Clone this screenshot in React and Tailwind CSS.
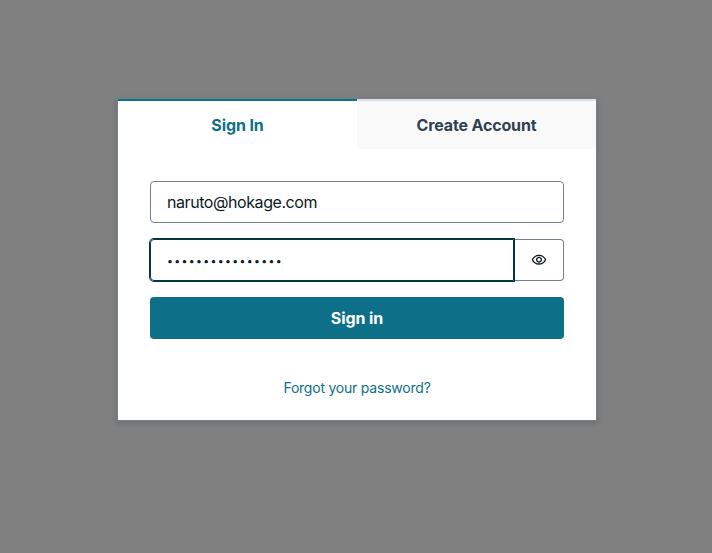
import { useState } from "react";
import { MdOutlineVisibility } from "react-icons/md";

export default function App() {
  const [email, setEmail] = useState("naruto@hokage.com");
  const [password, setPassword] = useState("believeit-hokage");

  return (
    <div className="h-screen overflow-hidden bg-[#808080] pl-[117px] pt-[98px] font-['Inter','Liberation_Sans',sans-serif] text-base text-[#0d1a26]">
      <main className="h-[323px] w-[480px] border border-[#76808c] bg-white shadow-[0_2px_6px_rgba(13,26,38,0.2)]">
        <div className="grid grid-cols-2">
          <button className="h-[50px] border-t-2 border-[#0e7088] text-center font-bold leading-6 text-[#0e7088]">
            <span className="tracking-[-0.1px]">Sign In</span>
          </button>
          <button className="h-[50px] border-t-2 border-[#dcdee0] bg-[#f9f9fa] text-center font-bold leading-6 text-[#304050]">
            <span className="tracking-[-0.15px]">Create Account</span>
          </button>
        </div>
        <form className="flex flex-col gap-4 px-8 pt-8">
          <input
            className="h-[42px] w-full rounded border border-[#748091] px-4 tracking-[-0.43px] outline-none"
            value={email}
            onChange={(e) => setEmail(e.target.value)}
          />
          <div className="flex h-[42px]">
            <input
              type="password"
              className="relative w-[364px] rounded-l border border-[#023640] px-4 pt-[3px] text-[10.5px] tracking-[1.35px] shadow-[0_0_0_1px_#023640] outline-none"
              value={password}
              onChange={(e) => setPassword(e.target.value)}
            />
            <button
              type="button"
              aria-label="Show password"
              className="flex flex-1 items-center justify-center rounded-r border border-l-0 border-[#748091]"
            >
              <MdOutlineVisibility className="size-4" />
            </button>
          </div>
          <button type="button" className="h-[42px] rounded bg-[#0e7088] font-bold tracking-[-0.1px] text-white">
            Sign in
          </button>
        </form>
        <div className="mt-[38px] text-center text-sm leading-[21px] tracking-[-0.22px] text-[#0e7088]">
          Forgot your password?
        </div>
      </main>
    </div>
  );
}
